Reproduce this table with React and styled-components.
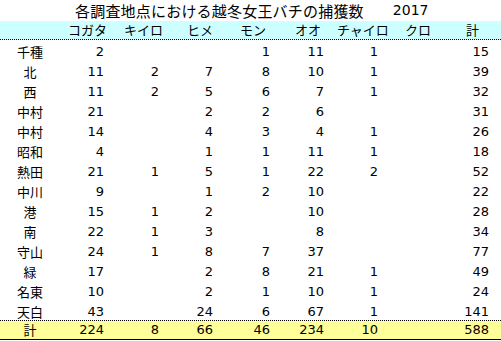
import React from 'react';
import styled, { createGlobalStyle } from 'styled-components';

const GlobalStyle = createGlobalStyle`
  html, body {
    margin: 0;
    padding: 0;
    background: #ffffff;
  }
  body {
    width: 501px;
    height: 341px;
    overflow: hidden;
  }
`;

const COLS = '60px 47px 55px 54px 57px 54px 54px 55px 56px 9px';

const Sheet = styled.div`
  width: 501px;
  height: 341px;
  display: flex;
  flex-direction: column;
  color: #000;
  font-family: "DejaVu Sans", "Noto Sans CJK JP", sans-serif;
`;

const TitleBar = styled.div`
  height: 21px;
  display: flex;
  align-items: flex-start;
  padding-left: 75px;
  gap: 29px;
  box-sizing: border-box;
`;

const TitleText = styled.span`
  font-family: "Noto Sans CJK JP", sans-serif;
  font-size: 15px;
  line-height: 21px;
  letter-spacing: 0.2px;
`;

const Year = styled.span`
  font-size: 14px;
  line-height: 21px;
`;

const HeaderRow = styled.div`
  display: grid;
  grid-template-columns: ${COLS};
  height: 18px;
  background: #ccffff;
  border-bottom: 1px dotted #000;
`;

const HeadCell = styled.div`
  font-family: "Noto Sans CJK JP", sans-serif;
  font-size: 13px;
  line-height: 18px;
  white-space: nowrap;
  padding-left: ${p => p.$indent}px;
`;

const Row = styled.div`
  display: grid;
  grid-template-columns: ${COLS};
  height: 20px;
`;

const TotalRow = styled(Row)`
  height: 18px;
  background: #ffff99;
  border-top: 1px dotted #000;
  border-bottom: 1px solid #000;
`;

const LabelCell = styled.div`
  font-family: "Noto Sans CJK JP", sans-serif;
  font-size: 13px;
  line-height: ${p => (p.$total ? '18px' : '20px')};
  padding-top: ${p => (p.$total ? '0' : '2px')};
  text-align: center;
  white-space: nowrap;
`;

const NumCell = styled.div`
  font-size: 13px;
  line-height: ${p => (p.$total ? '18px' : '20px')};
  padding-top: ${p => (p.$total ? '0' : '2px')};
  padding-right: 3px;
  text-align: right;
`;

const headers = [
  ['コガタ', 8],
  ['キイロ', 17],
  ['ヒメ', 25],
  ['モン', 24],
  ['オオ', 22],
  ['チャイロ', 10],
  ['クロ', 24],
  ['計', 30],
];

const rows = [
  ['千種', 2, '', '', 1, 11, 1, '', 15],
  ['北', 11, 2, 7, 8, 10, 1, '', 39],
  ['西', 11, 2, 5, 6, 7, 1, '', 32],
  ['中村', 21, '', 2, 2, 6, '', '', 31],
  ['中村', 14, '', 4, 3, 4, 1, '', 26],
  ['昭和', 4, '', 1, 1, 11, 1, '', 18],
  ['熱田', 21, 1, 5, 1, 22, 2, '', 52],
  ['中川', 9, '', 1, 2, 10, '', '', 22],
  ['港', 15, 1, 2, '', 10, '', '', 28],
  ['南', 22, 1, 3, '', 8, '', '', 34],
  ['守山', 24, 1, 8, 7, 37, '', '', 77],
  ['緑', 17, '', 2, 8, 21, 1, '', 49],
  ['名東', 10, '', 2, 1, 10, 1, '', 24],
  ['天白', 43, '', 24, 6, 67, 1, '', 141],
];

const total = ['計', 224, 8, 66, 46, 234, 10, '', 588];

export default function App() {
  return (
    <>
      <GlobalStyle />
      <Sheet>
        <TitleBar>
          <TitleText>各調査地点における越冬女王バチの捕獲数</TitleText>
          <Year>2017</Year>
        </TitleBar>

        <HeaderRow>
          <div />
          {headers.map(([name, indent]) => (
            <HeadCell key={name} $indent={indent}>{name}</HeadCell>
          ))}
          <div />
        </HeaderRow>

        {rows.map((r, i) => (
          <Row key={i}>
            <LabelCell>{r[0]}</LabelCell>
            {r.slice(1).map((v, j) => (
              <NumCell key={j}>{v}</NumCell>
            ))}
            <div />
          </Row>
        ))}

        <TotalRow>
          <LabelCell $total>{total[0]}</LabelCell>
          {total.slice(1).map((v, j) => (
            <NumCell key={j} $total>{v}</NumCell>
          ))}
          <div />
        </TotalRow>
      </Sheet>
    </>
  );
}
